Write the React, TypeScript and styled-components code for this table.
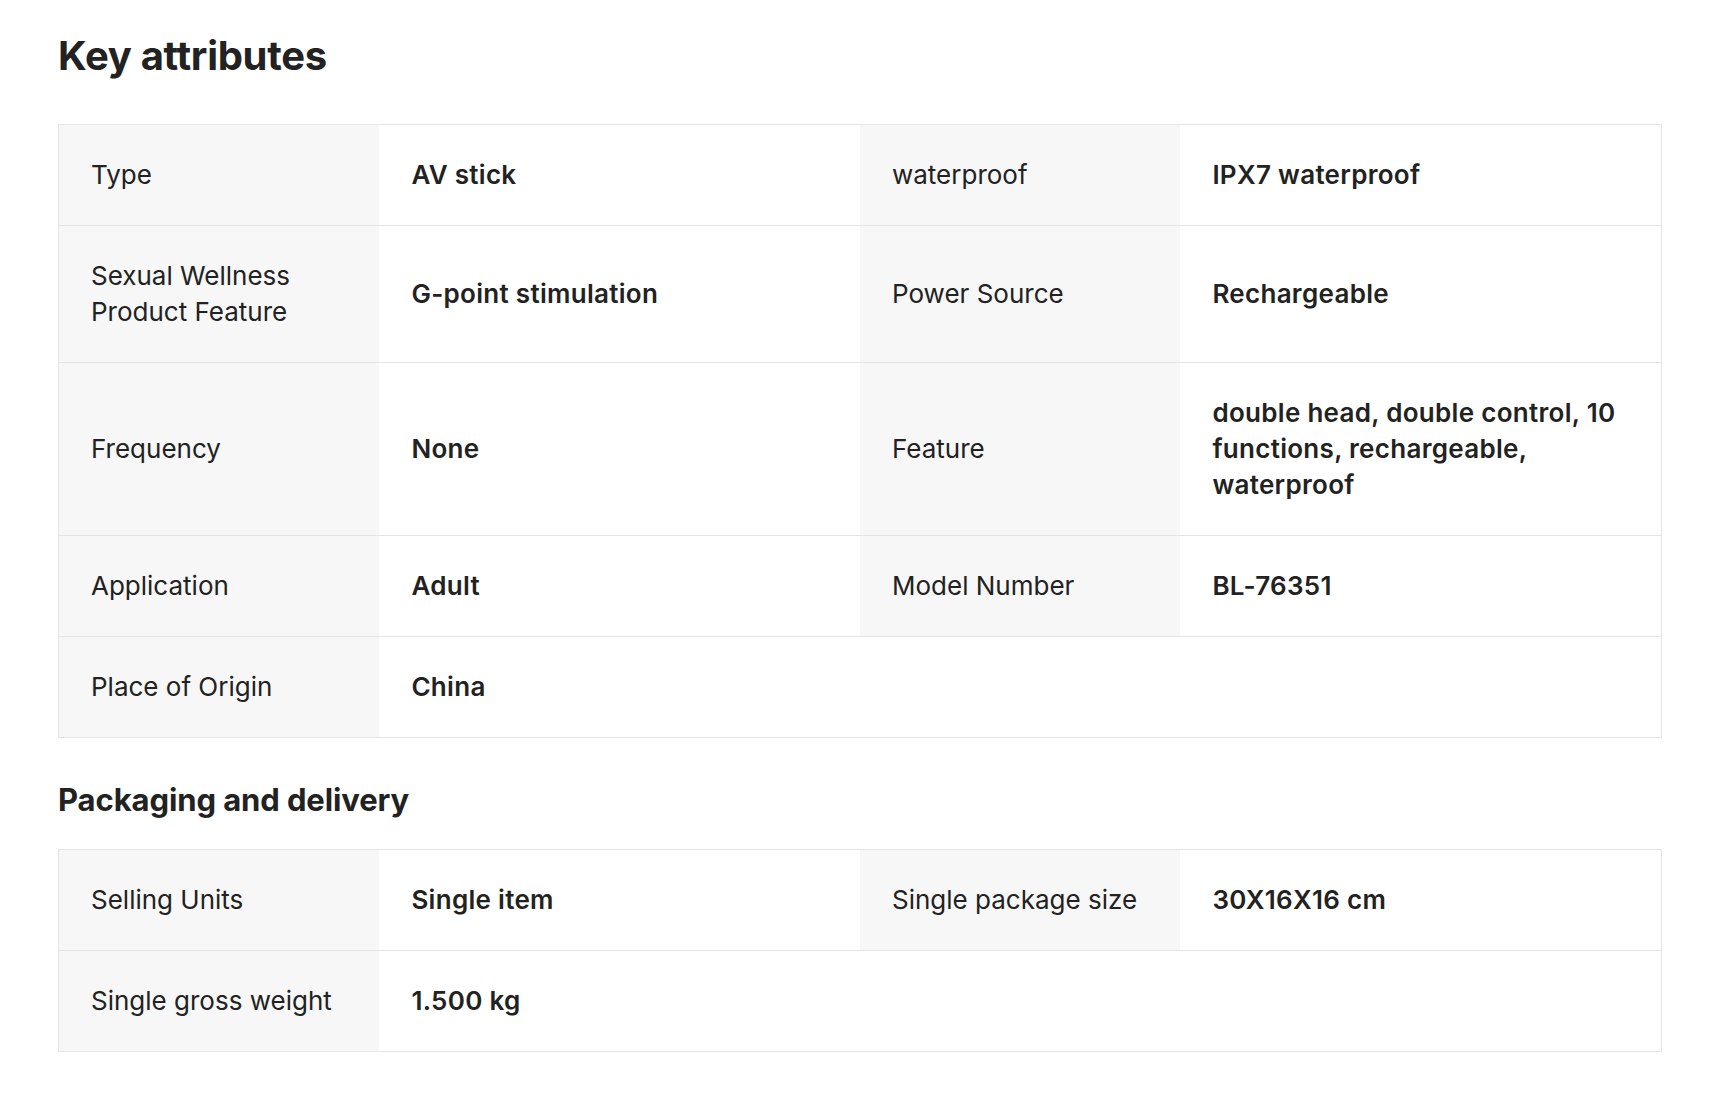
import React from "react";
import styled, { createGlobalStyle } from "styled-components";

const GlobalStyle = createGlobalStyle`
  html, body {
    margin: 0;
    padding: 0;
    background: #ffffff;
  }
  body {
    font-family: Inter, "Noto Sans", "Liberation Sans", sans-serif;
    color: #222222;
  }
`;

const Page = styled.div`
  padding: 32px 62px 40px 58px;
`;

const Title = styled.h1`
  margin: 0 0 44px;
  font-size: 40px;
  line-height: 48px;
  font-weight: 700;
  letter-spacing: -0.3px;
`;

const SubTitle = styled.h2`
  margin: 44px 0 31px;
  font-size: 31px;
  line-height: 36px;
  font-weight: 700;
  letter-spacing: -0.1px;
`;

const Table = styled.div`
  border: 1px solid #e4e4e4;
`;

const Row = styled.div`
  display: grid;
  grid-template-columns: 20% 30% 20% 30%;
  border-bottom: 1px solid #e4e4e4;
  &:last-child {
    border-bottom: none;
  }
`;

const Cell = styled.div<{ $label?: boolean }>`
  display: flex;
  align-items: center;
  padding: 32px;
  font-size: 26px;
  line-height: 36px;
  font-weight: ${(p) => (p.$label ? 400 : 600)};
  letter-spacing: ${(p) => (p.$label ? "0" : "0.3px")};
  background: ${(p) => (p.$label ? "#f7f7f7" : "#ffffff")};
  color: #222222;
`;

const Empty = styled.div`
  grid-column: span 2;
  background: #ffffff;
`;

type Pair = [string, string];

const keyRows: Pair[][] = [
  [["Type", "AV stick"], ["waterproof", "IPX7 waterproof"]],
  [["Sexual Wellness Product Feature", "G-point stimulation"], ["Power Source", "Rechargeable"]],
  [["Frequency", "None"], ["Feature", "double head, double control, 10 functions, rechargeable, waterproof"]],
  [["Application", "Adult"], ["Model Number", "BL-76351"]],
  [["Place of Origin", "China"]],
];

const packRows: Pair[][] = [
  [["Selling Units", "Single item"], ["Single package size", "30X16X16 cm"]],
  [["Single gross weight", "1.500 kg"]],
];

function AttrTable({ rows }: { rows: Pair[][] }) {
  return (
    <Table>
      {rows.map((row, i) => (
        <Row key={i}>
          {row.map(([label, value]) => (
            <React.Fragment key={label}>
              <Cell $label>{label}</Cell>
              <Cell>{value}</Cell>
            </React.Fragment>
          ))}
          {row.length === 1 && <Empty />}
        </Row>
      ))}
    </Table>
  );
}

export default function App() {
  return (
    <>
      <GlobalStyle />
      <Page>
        <Title>Key attributes</Title>
        <AttrTable rows={keyRows} />
        <SubTitle>Packaging and delivery</SubTitle>
        <AttrTable rows={packRows} />
      </Page>
    </>
  );
}
